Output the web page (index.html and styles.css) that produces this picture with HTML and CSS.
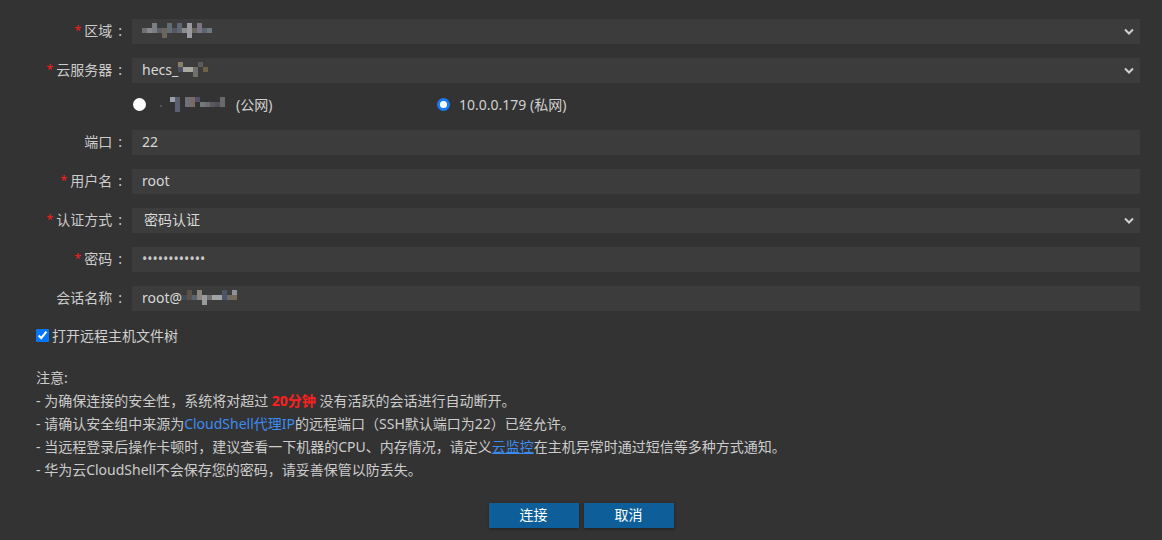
FILE: index.html
```
<!DOCTYPE html>
<html lang="zh-CN">
<head>
    <meta charset="UTF-8">
    <title>CloudShell 登录</title>
    <link rel="stylesheet" href="styles.css">
</head>
<body>
    <form class="login-form">
        <div class="row">
            <label class="label"><span class="req">*</span>区域<span class="colon">:</span></label>
            <div class="field">
                <div class="fake-select">
                    <svg class="mosaic" width="80" height="15">
                        <rect x="0" y="5" width="5" height="5" fill="#6f6f74"/>
                        <rect x="5" y="5" width="5" height="5" fill="#888"/>
                        <rect x="10" y="0" width="5" height="10" fill="#7a7f86"/>
                        <rect x="15" y="5" width="5" height="5" fill="#5d6068"/>
                        <rect x="20" y="5" width="5" height="10" fill="#6d655c"/>
                        <rect x="25" y="0" width="5" height="10" fill="#626b78"/>
                        <rect x="30" y="5" width="5" height="5" fill="#56585c"/>
                        <rect x="35" y="0" width="5" height="10" fill="#5e6773"/>
                        <rect x="40" y="5" width="5" height="5" fill="#8a8c90"/>
                        <rect x="45" y="0" width="5" height="15" fill="#9a9aa0"/>
                        <rect x="50" y="5" width="5" height="5" fill="#6a6662"/>
                        <rect x="55" y="0" width="5" height="10" fill="#7d7585"/>
                        <rect x="60" y="5" width="5" height="5" fill="#5c6470"/>
                        <rect x="65" y="5" width="5" height="5" fill="#707880"/>
                    </svg>
                </div>
                <svg class="chevron" width="10" height="7" viewBox="0 0 10 7"><path d="M1 1.5 L5 5.5 L9 1.5" fill="none" stroke="#d0d0d0" stroke-width="2"/></svg>
            </div>
        </div>
        <div class="row">
            <label class="label"><span class="req">*</span>云服务器<span class="colon">:</span></label>
            <div class="field">
                <div class="fake-select">hecs_<svg class="mosaic" width="32" height="15">
                        <rect x="0" y="0" width="5" height="5" fill="#8a7e6a"/>
                        <rect x="0" y="5" width="5" height="5" fill="#4a5064"/>
                        <rect x="5" y="5" width="10" height="5" fill="#a8a8a0"/>
                        <rect x="15" y="5" width="5" height="10" fill="#70706a"/>
                        <rect x="20" y="0" width="5" height="5" fill="#5c5c5c"/>
                        <rect x="25" y="5" width="5" height="5" fill="#6d6248"/>
                    </svg></div>
                <svg class="chevron" width="10" height="7" viewBox="0 0 10 7"><path d="M1 1.5 L5 5.5 L9 1.5" fill="none" stroke="#d0d0d0" stroke-width="2"/></svg>
            </div>
        </div>
        <div class="row radios">
            <label class="option">
                <input type="radio" name="ip">
                <svg class="mosaic" width="74" height="15">
                    <rect x="0" y="8" width="2" height="2" fill="#555"/>
                    <rect x="10" y="0" width="5" height="5" fill="#9aa0a8"/>
                    <rect x="15" y="0" width="5" height="15" fill="#5a6070"/>
                    <rect x="25" y="0" width="5" height="10" fill="#707078"/>
                    <rect x="30" y="0" width="5" height="10" fill="#7a6a66"/>
                    <rect x="35" y="0" width="5" height="5" fill="#52506a"/>
                    <rect x="40" y="5" width="5" height="5" fill="#707a7a"/>
                    <rect x="45" y="5" width="5" height="5" fill="#6a7070"/>
                    <rect x="50" y="5" width="5" height="5" fill="#5a5a5a"/>
                    <rect x="55" y="5" width="5" height="5" fill="#4e505c"/>
                    <rect x="60" y="0" width="5" height="10" fill="#6a6a6a"/>
                </svg>(公网)
            </label>
            <label class="option">
                <input type="radio" name="ip" checked>
                10.0.0.179 (私网)
            </label>
        </div>
        <div class="row">
            <label class="label">端口<span class="colon">:</span></label>
            <div class="field"><input type="text" value="22"></div>
        </div>
        <div class="row">
            <label class="label"><span class="req">*</span>用户名<span class="colon">:</span></label>
            <div class="field"><input type="text" value="root"></div>
        </div>
        <div class="row">
            <label class="label"><span class="req">*</span>认证方式<span class="colon">:</span></label>
            <div class="field">
                <div class="fake-select indent">密码认证</div>
                <svg class="chevron" width="10" height="7" viewBox="0 0 10 7"><path d="M1 1.5 L5 5.5 L9 1.5" fill="none" stroke="#d0d0d0" stroke-width="2"/></svg>
            </div>
        </div>
        <div class="row">
            <label class="label"><span class="req">*</span>密码<span class="colon">:</span></label>
            <div class="field"><div class="dots">••••••••••••</div></div>
        </div>
        <div class="row">
            <label class="label">会话名称<span class="colon">:</span></label>
            <div class="field">
                <div class="fake-select">root@<svg class="mosaic" width="68" height="15">
                        <rect x="0" y="5" width="5" height="5" fill="#3e4a58"/>
                        <rect x="5" y="0" width="5" height="10" fill="#5a5248"/>
                        <rect x="10" y="5" width="5" height="5" fill="#5a6470"/>
                        <rect x="15" y="0" width="5" height="10" fill="#8a8580"/>
                        <rect x="20" y="5" width="5" height="10" fill="#9a9a9a"/>
                        <rect x="25" y="5" width="5" height="5" fill="#707070"/>
                        <rect x="30" y="5" width="10" height="5" fill="#a0a4a4"/>
                        <rect x="40" y="0" width="5" height="10" fill="#4e5468"/>
                        <rect x="45" y="5" width="5" height="5" fill="#6a6a6a"/>
                        <rect x="50" y="0" width="5" height="5" fill="#909098"/>
                        <rect x="50" y="5" width="5" height="5" fill="#7a6a55"/>
                    </svg></div>
            </div>
        </div>

        <label class="check-row"><input type="checkbox" checked>打开远程主机文件树</label>

        <div class="notes">
            <p>注意:</p>
            <p>- 为确保连接的安全性，系统将对超过 <b class="warn">20分钟</b> 没有活跃的会话进行自动断开。</p>
            <p>- 请确认安全组中来源为<a class="link">CloudShell代理IP</a>的远程端口（SSH默认端口为22）已经允许。</p>
            <p>- 当远程登录后操作卡顿时，建议查看一下机器的CPU、内存情况，请定义<a class="link under">云监控</a>在主机异常时通过短信等多种方式通知。</p>
            <p>- 华为云CloudShell不会保存您的密码，请妥善保管以防丢失。</p>
        </div>

        <div class="actions">
            <button type="button" class="btn">连接</button>
            <button type="button" class="btn">取消</button>
        </div>
    </form>
</body>
</html>
```

FILE: styles.css
```
body {
    margin: 0;
    background: #333333;
    color: #cccccc;
    font-family: "Noto Sans", "Noto Sans CJK SC", sans-serif;
    font-size: 14px;
    height: 540px;
    overflow: hidden;
}

.login-form {
    padding: 19px 22px 0 36px;
}

.row {
    display: flex;
    align-items: center;
    height: 25px;
    margin-bottom: 14px;
}

.label {
    width: 86px;
    flex: none;
    text-align: right;
    white-space: nowrap;
    line-height: 23px;
    padding-bottom: 2px;
}

.req {
    color: #ff1a1a;
    font-size: 12px;
    margin-right: 3px;
    position: relative;
    top: -1px;
}

.colon {
    margin-left: 6px;
}

.field {
    flex: 1;
    margin-left: 10px;
    height: 25px;
    background: #3c3c3c;
    position: relative;
}

.field input {
    width: 100%;
    height: 25px;
    box-sizing: border-box;
    border: none;
    outline: none;
    background: transparent;
    color: #d8d8d8;
    font: inherit;
    padding: 0 10px 2px;
}

.fake-select {
    height: 23px;
    line-height: 23px;
    padding: 0 10px 2px;
    color: #d8d8d8;
    display: flex;
    align-items: center;
}

.fake-select.indent {
    padding-left: 12px;
}

.dots {
    height: 23px;
    line-height: 23px;
    padding: 0 10px 2px;
    color: #c8c8c8;
    font-size: 14px;
}

.mosaic {
    display: inline-block;
    flex: none;
    vertical-align: middle;
}

.chevron {
    position: absolute;
    right: 6px;
    top: 9px;
}

/* radio row */
.radios {
    margin-left: 96px;
    height: 15px;
    margin-bottom: 18px;
}

.option {
    width: 304px;
    display: flex;
    align-items: center;
    color: #d0d0d0;
    white-space: nowrap;
    line-height: 15px;
}

.option input {
    appearance: none;
    width: 13px;
    height: 13px;
    margin: 0 14px 0 1px;
    border-radius: 50%;
    background: #fff;
    box-sizing: border-box;
}

.option input:checked {
    border: 3px solid #1a7cf5;
    margin-right: 9px;
}

.option .mosaic {
    margin-right: 2px;
}

/* checkbox */
.check-row {
    display: flex;
    align-items: center;
    height: 22px;
    margin-top: -1px;
    color: #d0d0d0;
}

.check-row input {
    width: 13px;
    height: 13px;
    margin: 0 3px 0 0;
    accent-color: #0075ff;
}

.notes {
    margin-top: 20px;
    line-height: 23px;
}

.notes p {
    margin: 0;
}

.warn {
    color: #ff1f1f;
}

.link {
    color: #3b8cf0;
}

.link.under {
    text-decoration: underline;
}

.actions {
    display: flex;
    justify-content: center;
    gap: 5px;
    margin: 22px -22px 0 -36px;
}

.btn {
    width: 90px;
    height: 25px;
    border: none;
    background: #0e5f99;
    color: #fff;
    font: inherit;
    line-height: 23px;
    padding: 0 0 2px;
    box-shadow: 0 1px 3px rgba(0, 0, 0, 0.4);
    cursor: pointer;
}
```
